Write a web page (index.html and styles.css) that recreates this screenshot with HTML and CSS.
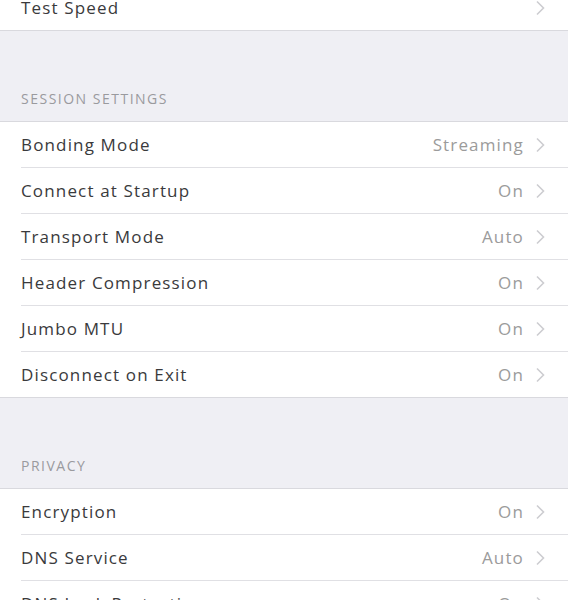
FILE: index.html
```html
<!DOCTYPE html>
<html>
<head>
<meta charset="utf-8">
<link rel="stylesheet" href="styles.css">
</head>
<body>
<div class="page">
  <div class="group first">
    <div class="row"><span class="label">Test Speed</span><span class="value"></span><span class="chev"><svg width="10" height="16" viewBox="0 0 10 16"><path d="M2 1.5 L8.5 8 L2 14.5" fill="none" stroke="#cdcdd1" stroke-width="1.6"/></svg></span></div>
  </div>
  <div class="header">SESSION SETTINGS</div>
  <div class="group">
    <div class="row"><span class="label">Bonding Mode</span><span class="value">Streaming</span><span class="chev"><svg width="10" height="16" viewBox="0 0 10 16"><path d="M2 1.5 L8.5 8 L2 14.5" fill="none" stroke="#cdcdd1" stroke-width="1.6"/></svg></span></div>
    <div class="row"><span class="label">Connect at Startup</span><span class="value">On</span><span class="chev"><svg width="10" height="16" viewBox="0 0 10 16"><path d="M2 1.5 L8.5 8 L2 14.5" fill="none" stroke="#cdcdd1" stroke-width="1.6"/></svg></span></div>
    <div class="row"><span class="label">Transport Mode</span><span class="value">Auto</span><span class="chev"><svg width="10" height="16" viewBox="0 0 10 16"><path d="M2 1.5 L8.5 8 L2 14.5" fill="none" stroke="#cdcdd1" stroke-width="1.6"/></svg></span></div>
    <div class="row"><span class="label">Header Compression</span><span class="value">On</span><span class="chev"><svg width="10" height="16" viewBox="0 0 10 16"><path d="M2 1.5 L8.5 8 L2 14.5" fill="none" stroke="#cdcdd1" stroke-width="1.6"/></svg></span></div>
    <div class="row"><span class="label">Jumbo MTU</span><span class="value">On</span><span class="chev"><svg width="10" height="16" viewBox="0 0 10 16"><path d="M2 1.5 L8.5 8 L2 14.5" fill="none" stroke="#cdcdd1" stroke-width="1.6"/></svg></span></div>
    <div class="row"><span class="label">Disconnect on Exit</span><span class="value">On</span><span class="chev"><svg width="10" height="16" viewBox="0 0 10 16"><path d="M2 1.5 L8.5 8 L2 14.5" fill="none" stroke="#cdcdd1" stroke-width="1.6"/></svg></span></div>
  </div>
  <div class="header">PRIVACY</div>
  <div class="group">
    <div class="row"><span class="label">Encryption</span><span class="value">On</span><span class="chev"><svg width="10" height="16" viewBox="0 0 10 16"><path d="M2 1.5 L8.5 8 L2 14.5" fill="none" stroke="#cdcdd1" stroke-width="1.6"/></svg></span></div>
    <div class="row"><span class="label">DNS Service</span><span class="value">Auto</span><span class="chev"><svg width="10" height="16" viewBox="0 0 10 16"><path d="M2 1.5 L8.5 8 L2 14.5" fill="none" stroke="#cdcdd1" stroke-width="1.6"/></svg></span></div>
    <div class="row"><span class="label">DNS Leak Protection</span><span class="value">On</span><span class="chev"><svg width="10" height="16" viewBox="0 0 10 16"><path d="M2 1.5 L8.5 8 L2 14.5" fill="none" stroke="#cdcdd1" stroke-width="1.6"/></svg></span></div>
  </div>
</div>
</body>
</html>
```
FILE: styles.css
```css
html, body {
  margin: 0;
  padding: 0;
  background: #efeff4;
  font-family: "Open Sans", "Liberation Sans", sans-serif;
  overflow: hidden;
}
.page {
  width: 568px;
}
.group {
  background: #fff;
  border-top: 1px solid #d9d9de;
  border-bottom: 1px solid #d9d9de;
}
.group.first {
  border-top: none;
  margin-top: -15px;
}
.row {
  display: flex;
  align-items: center;
  height: 45px;
  margin-left: 21px;
  padding-right: 23px;
  border-bottom: 1px solid #e0e0e4;
}
.row:last-child {
  border-bottom: none;
}
.label {
  flex: 1;
  font-size: 17px;
  letter-spacing: 1.15px;
  color: #3a3a3c;
}
.value {
  font-size: 17px;
  letter-spacing: 1.15px;
  color: #9b9b9b;
  margin-right: 11px;
}
.chev {
  display: flex;
  align-items: center;
  width: 10px;
  height: 16px;
}
.header {
  height: 90px;
  box-sizing: border-box;
  padding: 0 21px 13px;
  display: flex;
  align-items: flex-end;
  font-size: 14px;
  letter-spacing: 1.5px;
  color: #9a9a9e;
}
```
